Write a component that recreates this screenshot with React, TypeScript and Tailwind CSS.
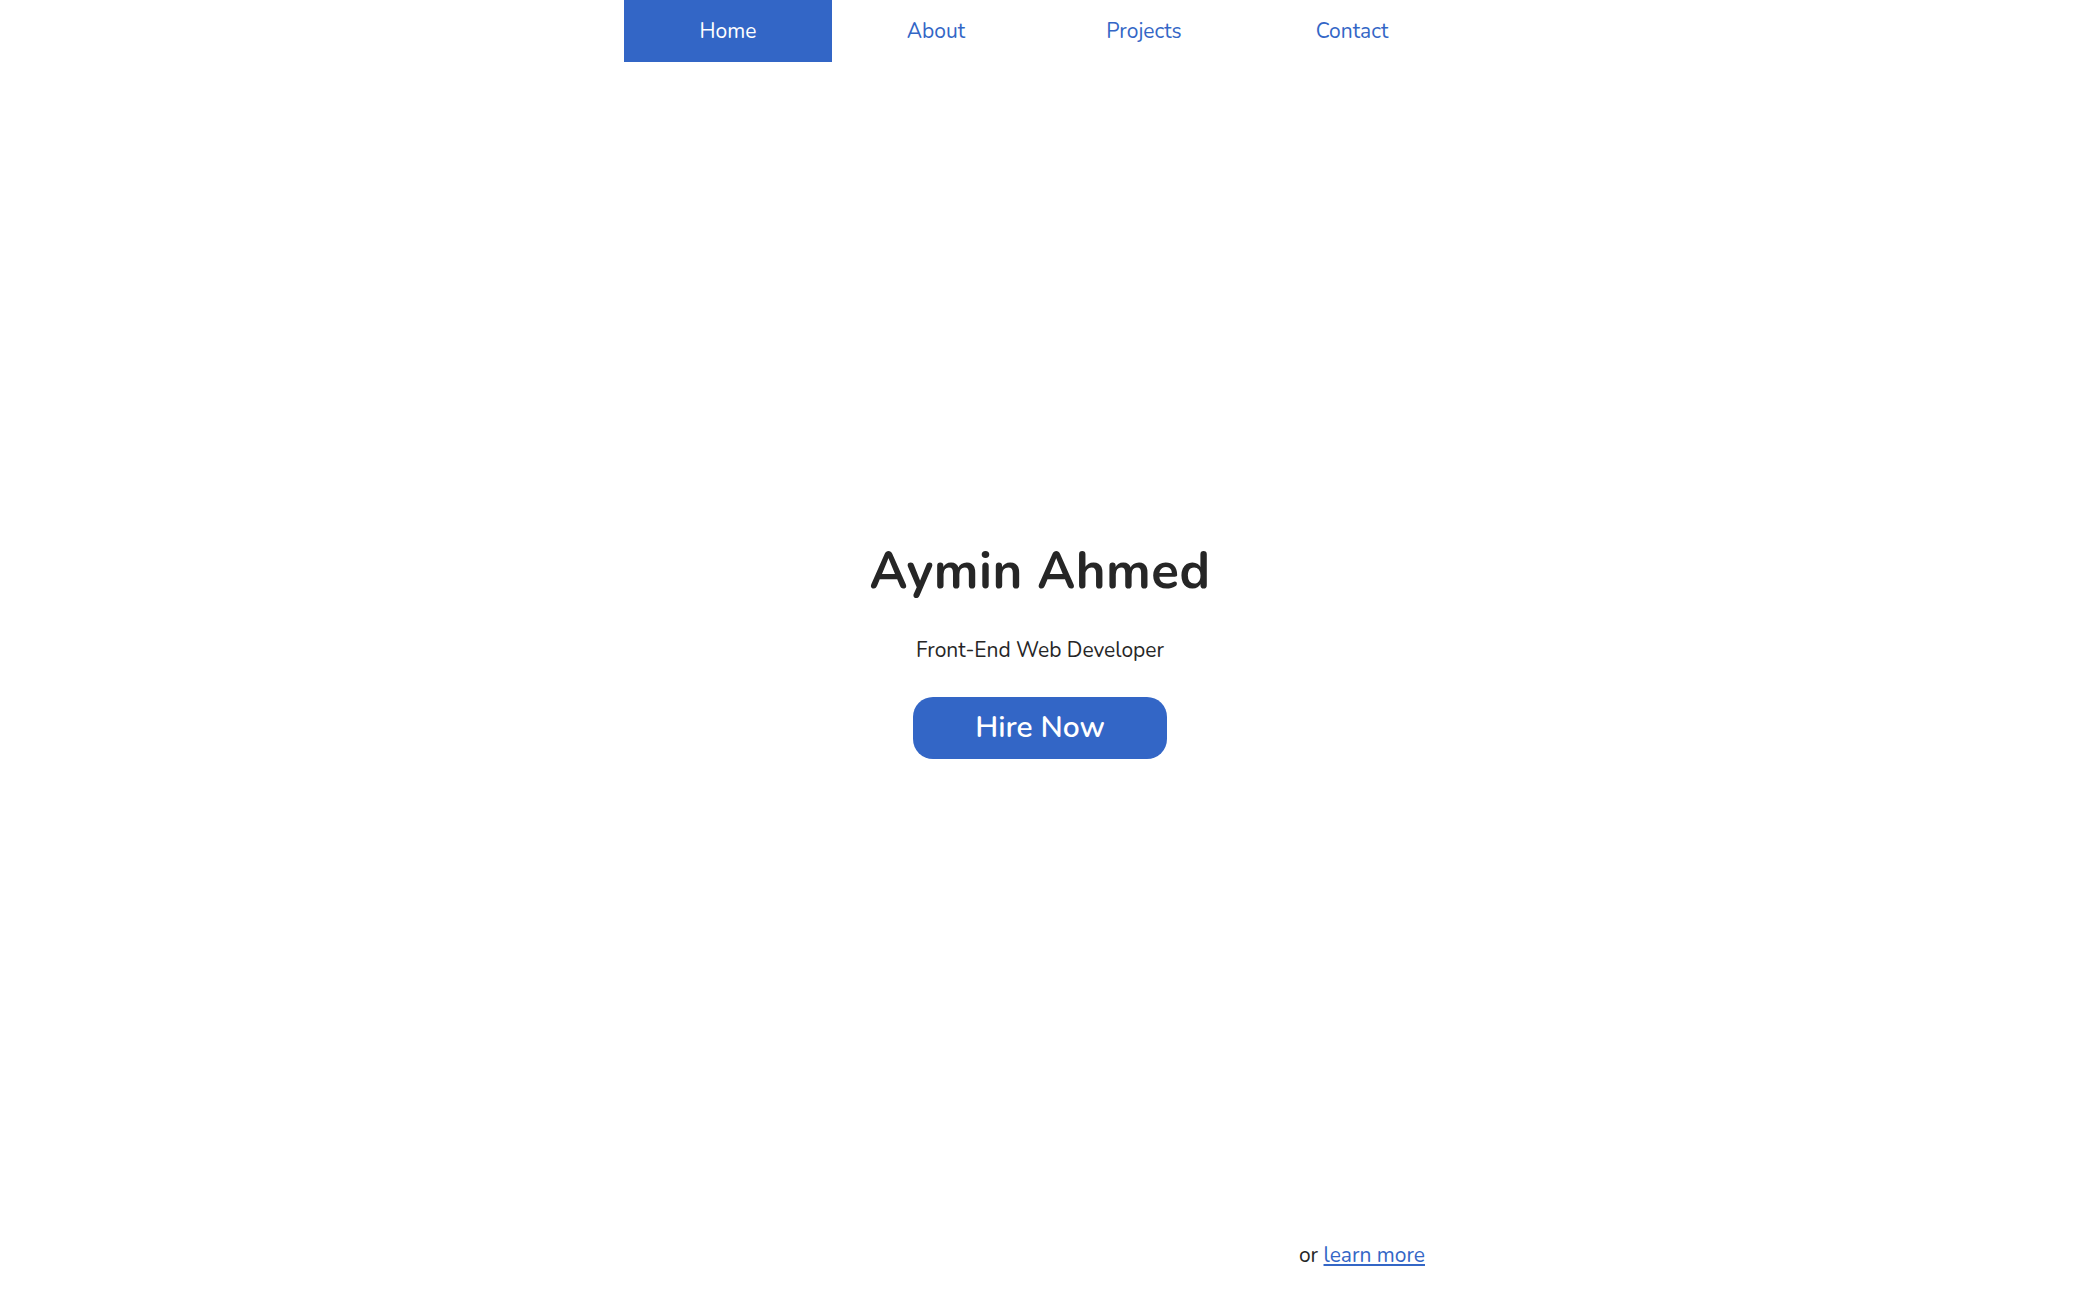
const links = ["Home", "About", "Projects", "Contact"];

const App = () => {
  return (
    <div className="flex min-h-screen flex-col bg-white font-['Nunito','Lato','Open_Sans',sans-serif] text-[#262626]">
      <nav className="mx-auto flex w-[832px]">
        {links.map((link, i) => (
          <a
            key={link}
            href="#"
            className={
              i === 0
                ? "flex h-[62px] w-[208px] items-center justify-center bg-[#3366c6] pt-[2px] text-[21px] text-white"
                : "flex h-[62px] w-[208px] items-center justify-center pt-[2px] text-[21px] text-[#3366c6]"
            }
          >
            {link}
          </a>
        ))}
      </nav>

      <main className="flex flex-1 flex-col items-center justify-center pt-[2px]">
        <h1 className="text-[51px] leading-none font-bold tracking-[0.5px]">
          Aymin Ahmed
        </h1>
        <p className="mt-[43px] text-[21px] leading-none">
          Front-End Web Developer
        </p>
        <button className="mt-[36px] flex h-[62px] w-[254px] items-center justify-center rounded-[20px] bg-[#3366c6] text-[30px] font-semibold text-white">
          Hire Now
        </button>
      </main>

      <footer className="mx-auto flex h-[60px] w-[832px] justify-end pr-[31px]">
        <p className="text-[21px]">
          or{" "}
          <a href="#" className="text-[#3366c6] underline">
            learn more
          </a>
        </p>
      </footer>
    </div>
  );
};

export default App;
